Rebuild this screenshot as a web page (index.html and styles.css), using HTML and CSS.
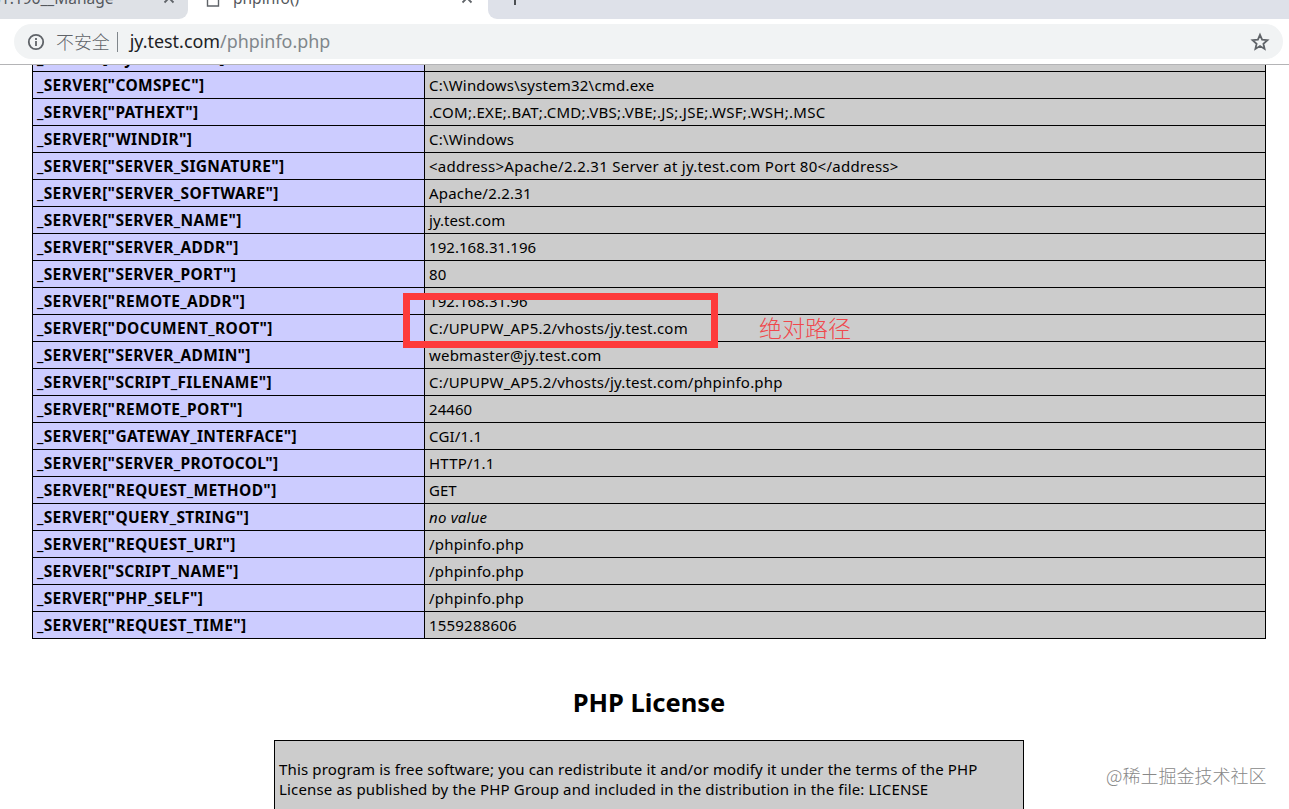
FILE: index.html
```
<!DOCTYPE html>
<html lang="zh-CN">
<head>
  <meta charset="UTF-8">
  <title>phpinfo()</title>
  <link rel="stylesheet" href="styles.css">
</head>
<body>
  <div class="tabs">
    <div class="tab tab-left">
      <span class="tab-title">31.196__Manage</span>
      <svg class="tab-close" width="12" height="12" viewBox="0 0 12 12"><path d="M1.5 1.5l9 9M10.5 1.5l-9 9"/></svg>
    </div>
    <div class="tab tab-active">
      <svg class="tab-file" width="14" height="18" viewBox="0 0 14 18"><path d="M1.5 1h7l4 4v12h-11z"/></svg>
      <span class="tab-title">phpinfo()</span>
      <svg class="tab-close" width="12" height="12" viewBox="0 0 12 12"><path d="M1.5 1.5l9 9M10.5 1.5l-9 9"/></svg>
    </div>
    <div class="tab tab-rest">
      <svg class="tab-new" width="14" height="14" viewBox="0 0 14 14"><path d="M7 0v14M0 7h14"/></svg>
    </div>
  </div>

  <div class="toolbar">
    <div class="address">
      <svg class="info" width="18" height="18" viewBox="0 0 18 18"><circle cx="9" cy="9" r="7.2"/><path d="M9 8v5M9 5v2"/></svg>
      <span class="insecure">不安全</span>
      <span class="divider"></span>
      <span class="url">jy.test.com<span class="path">/phpinfo.php</span></span>
      <svg class="star" width="20" height="20" viewBox="0 0 20 20"><path d="M10 2.8l2.1 4.9 5.3.5-4 3.5 1.2 5.2-4.6-2.8-4.6 2.8 1.2-5.2-4-3.5 5.3-.5z"/></svg>
    </div>
  </div>

  <div class="page">
    <table class="vars">
      <tr><td class="e">_SERVER["SystemRoot"]</td><td class="v">C:\Windows</td></tr>
      <tr><td class="e">_SERVER["COMSPEC"]</td><td class="v">C:\Windows\system32\cmd.exe</td></tr>
      <tr><td class="e">_SERVER["PATHEXT"]</td><td class="v wide">.COM;.EXE;.BAT;.CMD;.VBS;.VBE;.JS;.JSE;.WSF;.WSH;.MSC</td></tr>
      <tr><td class="e">_SERVER["WINDIR"]</td><td class="v">C:\Windows</td></tr>
      <tr><td class="e">_SERVER["SERVER_SIGNATURE"]</td><td class="v wide">&lt;address&gt;Apache/2.2.31 Server at jy.test.com Port 80&lt;/address&gt;</td></tr>
      <tr><td class="e">_SERVER["SERVER_SOFTWARE"]</td><td class="v">Apache/2.2.31</td></tr>
      <tr><td class="e">_SERVER["SERVER_NAME"]</td><td class="v num">jy.test.com</td></tr>
      <tr><td class="e">_SERVER["SERVER_ADDR"]</td><td class="v num">192.168.31.196</td></tr>
      <tr><td class="e">_SERVER["SERVER_PORT"]</td><td class="v num">80</td></tr>
      <tr><td class="e">_SERVER["REMOTE_ADDR"]</td><td class="v num">192.168.31.96</td></tr>
      <tr><td class="e">_SERVER["DOCUMENT_ROOT"]</td><td class="v">C:/UPUPW_AP5.2/vhosts/jy.test.com</td></tr>
      <tr><td class="e">_SERVER["SERVER_ADMIN"]</td><td class="v">webmaster@jy.test.com</td></tr>
      <tr><td class="e">_SERVER["SCRIPT_FILENAME"]</td><td class="v">C:/UPUPW_AP5.2/vhosts/jy.test.com/phpinfo.php</td></tr>
      <tr><td class="e">_SERVER["REMOTE_PORT"]</td><td class="v num">24460</td></tr>
      <tr><td class="e">_SERVER["GATEWAY_INTERFACE"]</td><td class="v">CGI/1.1</td></tr>
      <tr><td class="e">_SERVER["SERVER_PROTOCOL"]</td><td class="v">HTTP/1.1</td></tr>
      <tr><td class="e">_SERVER["REQUEST_METHOD"]</td><td class="v num">GET</td></tr>
      <tr><td class="e">_SERVER["QUERY_STRING"]</td><td class="v"><i>no value</i></td></tr>
      <tr><td class="e">_SERVER["REQUEST_URI"]</td><td class="v">/phpinfo.php</td></tr>
      <tr><td class="e">_SERVER["SCRIPT_NAME"]</td><td class="v">/phpinfo.php</td></tr>
      <tr><td class="e">_SERVER["PHP_SELF"]</td><td class="v">/phpinfo.php</td></tr>
      <tr><td class="e">_SERVER["REQUEST_TIME"]</td><td class="v">1559288606</td></tr>
    </table>

    <h2>PHP License</h2>

    <div class="license">
      <p>This program is free software; you can redistribute it and/or modify it under the terms of the PHP<br>License as published by the PHP Group and included in the distribution in the file: LICENSE</p>
    </div>
  </div>

  <div class="mark-box"></div>
  <div class="mark-text">绝对路径</div>
  <div class="watermark">@稀土掘金技术社区</div>
</body>
</html>
```
FILE: styles.css
```
body {
  margin: 0;
  height: 809px;
  position: relative;
  overflow: hidden;
  display: flex;
  flex-direction: column;
  background-color: #fff;
  color: #000;
  font-family: "Noto Sans", "Noto Sans CJK SC", sans-serif;
  font-size: 15px;
}

svg {
  display: block;
  flex: none;
  fill: none;
  stroke: #5f6368;
  stroke-width: 1.8;
}

/* tab strip */
.tabs {
  display: flex;
  height: 19px;
  flex: none;
  overflow: hidden;
}

.tab {
  display: flex;
  box-sizing: border-box;
  height: 19px;
  color: #54585d;
}

.tab-title {
  font-size: 15.5px;
  line-height: 20px;
  margin-top: -12px;
  white-space: nowrap;
}

.tab-left {
  width: 188px;
  background-color: #dee1e6;
  border-bottom-right-radius: 9px;
}

.tab-left .tab-title {
  width: 163px;
  text-indent: -8px;
}

.tab-left .tab-close,
.tab-active .tab-close {
  margin-top: -8px;
}

.tab-active {
  width: 300px;
  padding-left: 18px;
}

.tab-file {
  margin-top: -11px;
  stroke-width: 1.4;
}

.tab-active .tab-title {
  width: 229px;
  margin-left: 13px;
  margin-right: -1px;
}

.tab-rest {
  flex: 1;
  background-color: #dee1e9;
  border-bottom-left-radius: 9px;
}

.tab-new {
  margin: -9px 0 0 20px;
  stroke: #3c4043;
}

/* address bar */
.toolbar {
  box-sizing: border-box;
  height: 46px;
  flex: none;
  padding: 5px 6px 5px 14px;
  border-bottom: 1px solid #b4b4b6;
}

.address {
  display: flex;
  align-items: center;
  box-sizing: border-box;
  height: 35px;
  padding: 0 13px;
  border-radius: 18px;
  background-color: #f1f3f4;
  font-size: 17.9px;
}

.insecure {
  margin: -2px 0 0 11px;
  color: #5f6368;
  font-family: "Noto Sans CJK SC", sans-serif;
  font-weight: 300;
  line-height: 26px;
  white-space: nowrap;
}

.divider {
  width: 1px;
  height: 20px;
  margin: 0 12px 0 7px;
  background-color: #80868b;
}

.url {
  margin-top: -2px;
  color: #202124;
  line-height: 26px;
  white-space: nowrap;
}

.path {
  color: #80868b;
}

.star {
  margin-left: auto;
}

/* phpinfo page */
.page {
  flex: 1;
  overflow: hidden;
}

.vars {
  width: 1234px;
  margin: -21px 0 0 32px;
  border-collapse: collapse;
  table-layout: fixed;
}

.vars td {
  box-sizing: border-box;
  height: 27px;
  padding: 0 4px;
  border: 1px solid #000;
  line-height: 24px;
  white-space: nowrap;
}

.vars .e {
  width: 392px;
  background-color: #ccccff;
  font-size: 15.5px;
  font-weight: bold;
  letter-spacing: 0.35px;
}

.vars .v {
  background-color: #cccccc;
  letter-spacing: 0.2px;
}

.vars .wide {
  letter-spacing: 0.28px;
}

.vars .num {
  letter-spacing: 0.05px;
}

h2 {
  width: 1298px;
  margin: 45px 0 0;
  font-size: 25.5px;
  line-height: 36px;
  text-align: center;
}

.license {
  box-sizing: border-box;
  width: 750px;
  height: 100px;
  margin: 20px 0 0 274px;
  padding: 18px 4px;
  border: 1px solid #000;
  background-color: #cccccc;
}

.license p {
  margin: 0;
  line-height: 20px;
  letter-spacing: 0.155px;
  white-space: nowrap;
}

/* red highlight over DOCUMENT_ROOT */
.mark-box {
  position: absolute;
  top: 293px;
  left: 403px;
  box-sizing: border-box;
  width: 315px;
  height: 55px;
  border: 7px solid #fd3a3a;
}

.mark-text {
  position: absolute;
  top: 310px;
  left: 759px;
  color: #f0484c;
  font-family: "Noto Sans CJK SC", sans-serif;
  font-size: 23px;
  font-weight: 300;
  line-height: 34px;
}

.watermark {
  position: absolute;
  top: 762px;
  left: 1106px;
  color: #888;
  font-family: "Noto Sans CJK SC", sans-serif;
  font-size: 18px;
  font-weight: 300;
  line-height: 26px;
}
```
